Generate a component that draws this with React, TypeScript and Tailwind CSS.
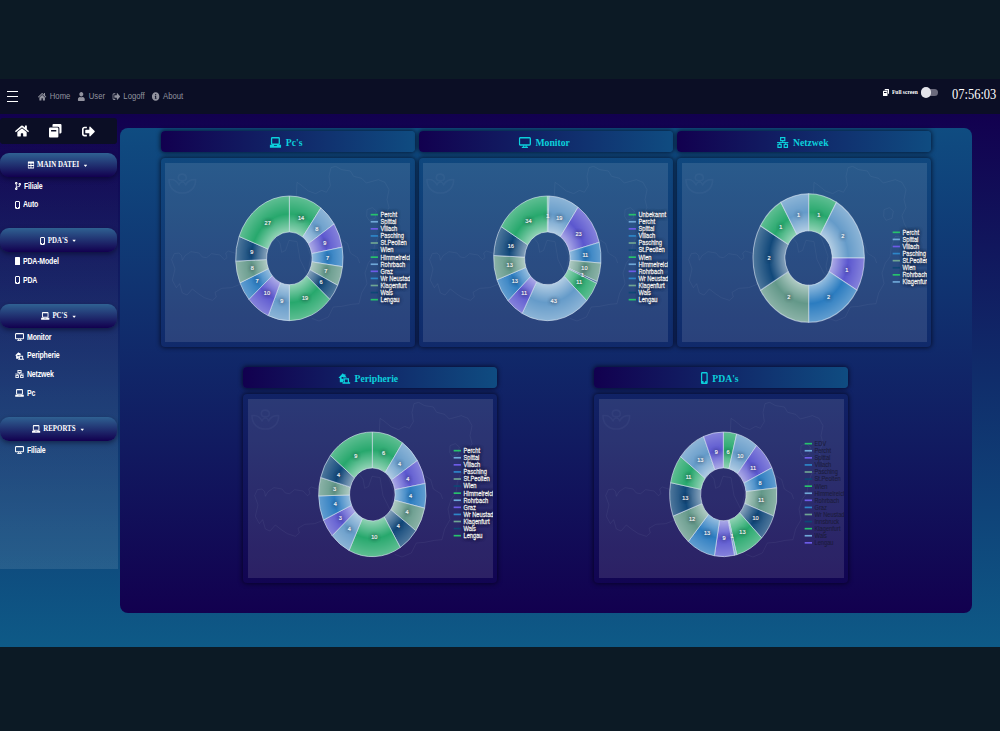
import React from "react";
import { FaHome, FaUser, FaSignOutAlt, FaInfoCircle, FaTable, FaCodeBranch, FaCaretDown } from "react-icons/fa";

const COLORS = ["#27a86d", "#659bc9", "#5b57cf", "#2b7cc0", "#639889", "#11487a"];
const MARKS = ["#27c26c", "#6fa8d8", "#6c5ce7", "#2e86c9", "#6fa593", "#0f4775"];

type Slice = [string, number];
type ChartData = { slices: Slice[]; cx: number; cy: number; rx: number; ry: number; lx: number; ly: number; dark?: boolean };

const PCS: ChartData = {
  cx: 373, cy: 286, rx: 161, ry: 187, lx: 617, ly: 155,
  slices: [["Percht", 14], ["Spittal", 8], ["Villach", 9], ["Pasching", 7], ["St.Peolten", 7], ["Wien", 6], ["Himmelreich", 19], ["Rohrbach", 9], ["Graz", 10], ["Wr Neustadt", 7], ["Klagenfurt", 8], ["Wals", 9], ["Lengau", 27]],
};
const MONITOR: ChartData = {
  cx: 373, cy: 286, rx: 161, ry: 187, lx: 617, ly: 155,
  slices: [["Unbekannt", 1], ["Percht", 19], ["Spittal", 23], ["Villach", 11], ["Pasching", 10], ["St.Peolten", 1], ["Wien", 11], ["Himmelreich", 43], ["Rohrbach", 11], ["Wr Neustadt", 13], ["Klagenfurt", 13], ["Wals", 16], ["Lengau", 34]],
};
const NETZ: ChartData = {
  cx: 380, cy: 285, rx: 167, ry: 193, lx: 632, ly: 208,
  slices: [["Percht", 1], ["Spittal", 2], ["Villach", 1], ["Pasching", 2], ["St.Peolten", 2], ["Wien", 2], ["Rohrbach", 1], ["Klagenfurt", 1]],
};
const PERI: ChartData = {
  cx: 373, cy: 286, rx: 161, ry: 187, lx: 617, ly: 155,
  slices: [["Percht", 6], ["Spittal", 4], ["Villach", 4], ["Pasching", 4], ["St.Peolten", 4], ["Wien", 4], ["Himmelreich", 10], ["Rohrbach", 4], ["Graz", 3], ["Wr Neustadt", 4], ["Klagenfurt", 3], ["Wals", 4], ["Lengau", 9]],
};
const PDAS: ChartData = {
  cx: 373, cy: 286, rx: 161, ry: 187, lx: 617, ly: 134, dark: true,
  slices: [["EDV", 6], ["Percht", 10], ["Spittal", 11], ["Villach", 8], ["Pasching", 11], ["St.Peolten", 10], ["Wien", 13], ["Himmelreich", 1], ["Rohrbach", 9], ["Graz", 13], ["Wr Neustadt", 12], ["Innsbruck", 13], ["Klagenfurt", 11], ["Wals", 13], ["Lengau", 9]],
};

const MAP =
  "M20 290L28 272L42 270L50 278L52 292L60 278L78 266L102 270L112 282L125 284L140 272L165 276L178 290L186 284L182 270L190 264L215 272L240 262L262 268L290 262L312 248L305 235L316 225L330 222L345 240L350 268L362 262L372 232L396 236L405 290L425 330L440 345L432 310L438 280L420 230L400 190M370 104L394 98L396 58L408 66L430 84L452 92L470 82L484 88L496 68L492 40L498 14L512 10L530 20L556 24L566 40L590 46L604 60L640 50L660 58L672 80L666 110L672 134L660 158L666 180L676 200L660 222L640 220M20 290L30 318L22 352L34 374L44 362L52 390L66 396L82 378L100 392L118 404L142 412L154 402L150 388L170 376L200 374L230 362L262 372L290 350M605 160L606 140L622 134L634 144L630 166L612 172ZM640 220L628 250L624 282L610 300L600 330L606 362L590 390L582 422L560 424L530 430L505 432L490 462L462 474L440 466M530 230L548 242L556 270L578 284L584 300";

function Donut({ data, id }: { data: ChartData; id: string }) {
  const { cx, cy, rx, ry } = data;
  const total = data.slices.reduce((s, x) => s + x[1], 0);
  const k = 0.424;
  let acc = 0;
  const parts = data.slices.map(([name, v], i) => {
    const a = (acc / total) * Math.PI * 2;
    acc += v;
    const b = (acc / total) * Math.PI * 2;
    const m = (a + b) / 2;
    const p = (t: number, r: number) => `${(Math.sin(t) * r).toFixed(4)} ${(-Math.cos(t) * r).toFixed(4)}`;
    const big = b - a > Math.PI ? 1 : 0;
    return {
      name, v, i,
      d: `M${p(a, 1)}A1 1 0 ${big} 1 ${p(b, 1)}L${p(b, k)}A${k} ${k} 0 ${big} 0 ${p(a, k)}Z`,
      tx: cx + Math.sin(m) * rx * 0.71,
      ty: cy - Math.cos(m) * ry * 0.69,
    };
  });
  return (
    <svg viewBox="0 0 735 537" preserveAspectRatio="none" className="block h-full w-full overflow-hidden" fontFamily="'Liberation Sans', Arial, sans-serif">
      <defs>
        <radialGradient id={id} gradientUnits="userSpaceOnUse" cx="0" cy="0" r="1">
          <stop offset="0.42" stopColor="#fff" stopOpacity="0.5" />
          <stop offset="0.71" stopColor="#fff" stopOpacity="0" />
          <stop offset="1" stopColor="#fff" stopOpacity="0.26" />
        </radialGradient>
      </defs>
      <g fill="none" stroke="#a9b6dc" strokeOpacity="0.075" strokeWidth="3" strokeLinejoin="round">
        <path d={MAP} />
        <path strokeWidth="5" strokeOpacity="0.06" d="M12 50C12 72 26 90 52 90C78 90 92 72 92 50C78 48 66 56 62 66C58 54 46 54 42 66C36 54 24 48 12 50ZM40 44C40 30 62 30 64 44C64 56 40 56 40 44Z" />
      </g>
      <g transform={`translate(${cx} ${cy}) scale(${rx} ${ry})`}>
        {parts.map((s) => (
          <g key={s.i}>
            <path d={s.d} fill={COLORS[s.i % 6]} />
            <path d={s.d} fill={`url(#${id})`} stroke="#dfeaf5" strokeOpacity="0.6" vectorEffect="non-scaling-stroke" className="[stroke-width:1px]" />
          </g>
        ))}
      </g>
      <g fontSize="18.5" fill="#fff" stroke="#fff" strokeWidth="0.5" textAnchor="middle" className="[text-shadow:0_0_4px_#223]">
        {parts.map((s) => (
          <text key={s.i} transform={`translate(${s.tx.toFixed(1)} ${(s.ty + 6.5).toFixed(1)}) scale(0.9 1)`}>{s.v}</text>
        ))}
      </g>
      {parts.map((s) => (
        <g key={s.i}>
          <rect x={data.lx} y={data.ly + s.i * 21.25 - 2.5} width="22" height="5" fill={MARKS[s.i % 6]} />
          <text
            transform={`translate(${data.lx + 29.5} ${data.ly + s.i * 21.25 + 7}) scale(0.865 1)`}
            fontSize="19.8"
            fill={data.dark ? "#1b1c3a" : "#fff"}
            stroke={data.dark ? "#1b1c3a" : "#fff"}
            strokeWidth={data.dark ? "0.2" : "0.8"}
            className={data.dark ? "" : "[text-shadow:0_0_4px_#112]"}
          >
            {s.name}
          </text>
        </g>
      ))}
    </svg>
  );
}

type IconProps = { className?: string };
const Laptop = ({ className }: IconProps) => (
  <svg viewBox="0 0 20 16" preserveAspectRatio="none" className={className} fill="none" stroke="currentColor" strokeWidth="2.2">
    <rect x="3.5" y="1.2" width="13" height="9.3" rx="1" />
    <path d="M0.5 11.4H7.5V12.6H12.5V11.4H19.5V15.6H0.5Z" fill="currentColor" stroke="none" />
  </svg>
);
const Screen = ({ className }: IconProps) => (
  <svg viewBox="0 0 20 16" preserveAspectRatio="none" className={className} fill="none" stroke="currentColor" strokeWidth="2.2">
    <rect x="1.2" y="1.2" width="17.6" height="10.3" rx="1.2" />
    <path d="M8 12V14.5M12 12V14.5M5 15H15" strokeWidth="1.8" />
  </svg>
);
const Network = ({ className }: IconProps) => (
  <svg viewBox="0 0 20 18" preserveAspectRatio="none" className={className} fill="none" stroke="currentColor" strokeWidth="2">
    <rect x="6.5" y="1" width="7" height="5" />
    <rect x="2" y="12" width="5.5" height="5" />
    <rect x="12.5" y="12" width="5.5" height="5" />
    <path d="M10 6V9M0.5 9H19.5M5 9V12M15 9V12" strokeWidth="1.6" />
  </svg>
);
const Phone = ({ className }: IconProps) => (
  <svg viewBox="0 0 10 16" preserveAspectRatio="none" className={className} fill="none" stroke="currentColor">
    <rect x="1" y="1" width="8" height="14" rx="1" strokeWidth="2" />
    <path d="M1.5 13.2H3.8M6.2 13.2H8.5" strokeWidth="2.6" />
  </svg>
);
const PhoneSolid = ({ className }: IconProps) => (
  <svg viewBox="0 0 10 16" preserveAspectRatio="none" className={className} fill="currentColor">
    <rect x="0" y="0" width="10" height="16" rx="1.2" />
  </svg>
);
const HouseLaptop = ({ className }: IconProps) => (
  <svg viewBox="0 0 20 18" preserveAspectRatio="none" className={className} fill="currentColor">
    <path fillRule="evenodd" d="M0 8L7.5 0.5L10 3V2H12V5L14.5 7.5H9V13H8V15H2.5V8ZM5.5 6.5V9.5H8.5V6.5Z" />
    <path fillRule="evenodd" d="M9 8.5H18V15H20V17.5H7V15H9ZM11 10.5V15H16V10.5Z" />
  </svg>
);
const Copy = ({ className }: IconProps) => (
  <svg viewBox="0 0 18 18" preserveAspectRatio="none" className={className} fill="currentColor">
    <path d="M6.5 0H16.5Q18 0 18 1.5V11Q18 12.5 16.5 12.5H15V5.5Q15 3.5 13 3.5H5V1.5Q5 0 6.5 0Z" />
    <path fillRule="evenodd" d="M0 6.3Q0 4.8 1.5 4.8H12Q13.5 4.8 13.5 6.3V16.5Q13.5 18 12 18H1.5Q0 18 0 16.5ZM3 8V10H10.5V8Z" />
  </svg>
);

function Group({ icon, title, items }: { icon: React.ReactNode; title: string; items: [React.ReactNode, string][] }) {
  return (
    <section className="mb-[14.2px] w-[117px]">
      <div className="flex h-6 items-center justify-center rounded-[9px] bg-linear-to-b/srgb from-[#2f6192] to-[#12004f] pt-[1.5px] font-['Liberation_Serif',serif] text-[8.4px] font-bold text-white shadow-[0_2px_5px_rgba(0,0,20,0.45)]">
        <div className="flex scale-x-[0.82] items-center gap-[3.5px]">
          {icon}
          <span className="whitespace-nowrap">{title}</span>
          <FaCaretDown className="ml-[1px] size-[7px]" />
        </div>
      </div>
      <ul>
        {items.map(([ic, label]) => (
          <li key={label} className="flex h-[18.7px] items-center gap-[3px] pl-[15px] text-[8.3px] font-bold tracking-[-0.2px] text-white">
            {ic}
            <span className="origin-left scale-x-[0.84] whitespace-nowrap">{label}</span>
          </li>
        ))}
      </ul>
    </section>
  );
}

function Card({ icon, title, data, id }: { icon: React.ReactNode; title: string; data: ChartData; id: string }) {
  return (
    <article className="w-[254px]">
      <h2 className="flex h-[21.5px] items-center justify-center rounded-[4px] bg-linear-to-r/srgb from-[#12004f] to-[#0f4c81] pt-[1.5px] font-['Liberation_Serif',serif] text-[11px] font-bold text-[#0cd0dc] shadow-[0_0_4px_1px_rgba(0,0,15,0.6)]">
        <div className="flex scale-x-[0.88] items-center gap-[5px] pr-[4px]">
          {icon}
          <span>{title}</span>
        </div>
      </h2>
      <div className="mt-[5.5px] h-[189.5px] rounded-[4px] px-[4.5px] pt-[5px] shadow-[0_0_4px_1px_rgba(0,0,15,0.6)]">
        <div className="h-[179px] w-[245px] bg-white/11">
          <Donut data={data} id={id} />
        </div>
      </div>
    </article>
  );
}

export default function App() {
  const phone = <Phone className="h-2 w-[5px]" />;
  return (
    <div className="h-[731px] w-[1000px] overflow-hidden bg-[#0c1a25] pt-[79px] font-['Liberation_Sans',Arial,sans-serif]">
      <div className="flex h-[568px] flex-col bg-linear-to-b/srgb from-[#12004f] from-6% to-[#0e5a87]">
        <header className="flex h-[35px] shrink-0 items-center bg-[#0b0e25] text-[8.8px] text-[#92939f]">
          <button className="ml-[7px] flex w-[10.5px] flex-col gap-[3.5px]" aria-label="Menu">
            <span className="h-[1.5px] bg-white" />
            <span className="h-[1.5px] bg-white" />
            <span className="h-[1.5px] bg-white" />
          </button>
          <nav className="ml-[20px] flex origin-left scale-x-[0.875] items-center gap-[8px]">
            <a className="flex items-center gap-1"><FaHome className="size-[9.5px]" />Home</a>
            <a className="flex items-center gap-1"><FaUser className="size-[9px]" />User</a>
            <a className="flex items-center gap-1"><FaSignOutAlt className="size-[9px]" />Logoff</a>
            <a className="flex items-center gap-1"><FaInfoCircle className="size-[9px]" />About</a>
          </nav>
          <div className="ml-auto flex items-center pb-[8px] font-['Liberation_Serif',serif] text-white">
            <Copy className="h-[7px] w-[6px]" />
            <span className="ml-[3px] w-[26px] text-[6.9px] font-bold">
              <span className="block origin-left scale-x-[0.8] whitespace-nowrap">Full screen</span>
            </span>
            <span className="ml-[3px] flex h-[7px] w-[17px] items-center rounded-full bg-[#6b6a7c]">
              <span className="h-[10.5px] w-[9.5px] shrink-0 rounded-full bg-[#e4e4ea]" />
            </span>
            <span className="ml-[14px] mr-[3.5px] w-[44.5px] pt-[4px] text-[14.5px] leading-none">
              <span className="block origin-left scale-x-[0.86] whitespace-nowrap">07:56:03</span>
            </span>
          </div>
        </header>
        <div className="flex min-h-0 flex-1">
          <aside className="h-[455px] w-[118px] bg-linear-to-b/srgb from-white/0 to-white/10 pt-[4px]">
            <div className="flex h-[26px] w-[117px] items-center rounded-[3px] bg-[#0b0e25] pl-[15px] text-white">
              <FaHome className="size-[14px]" />
              <Copy className="ml-[20px] h-[13.5px] w-[12.5px]" />
              <FaSignOutAlt className="ml-[20px] size-[13px]" />
            </div>
            <div className="pt-[8.5px]">
              <Group icon={<FaTable className="size-[8px]" />} title="MAIN DATEI" items={[[<FaCodeBranch className="h-2 w-[6px]" />, "Filiale"], [phone, "Auto"]]} />
              <Group icon={<Phone className="h-2 w-[6px]" />} title="PDA'S" items={[[<PhoneSolid className="h-2 w-[5px]" />, "PDA-Model"], [phone, "PDA"]]} />
              <Group icon={<Laptop className="h-2 w-[10.5px]" />} title="PC'S" items={[[<Screen className="h-2 w-[9px]" />, "Monitor"], [<HouseLaptop className="h-2 w-[9px]" />, "Peripherie"], [<Network className="h-2 w-[9px]" />, "Netzwek"], [<Laptop className="h-2 w-[9px]" />, "Pc"]]} />
              <Group icon={<Laptop className="h-2 w-[10.5px]" />} title="REPORTS" items={[[<Screen className="h-2 w-[9px]" />, "Filiale"]]} />
            </div>
          </aside>
          <main className="ml-[2px] mt-[13.5px] h-[485.5px] w-[852px] rounded-[8px] bg-linear-to-b/srgb from-[#0f4c81] to-[#12004f] pt-[3px]">
            <div className="flex gap-[4.4px] pl-[40.5px]">
              <Card id="g1" data={PCS} title="Pc's" icon={<Laptop className="h-[11px] w-[13.5px]" />} />
              <Card id="g2" data={MONITOR} title="Monitor" icon={<Screen className="h-[11px] w-[14px]" />} />
              <Card id="g3" data={NETZ} title="Netzwek" icon={<Network className="h-[11px] w-[13.5px]" />} />
            </div>
            <div className="mt-[19.5px] flex gap-[97px] pl-[123px]">
              <Card id="g4" data={PERI} title="Peripherie" icon={<HouseLaptop className="h-[11px] w-[13.5px]" />} />
              <Card id="g5" data={PDAS} title="PDA's" icon={<Phone className="h-[12px] w-[8px]" />} />
            </div>
          </main>
        </div>
      </div>
    </div>
  );
}
